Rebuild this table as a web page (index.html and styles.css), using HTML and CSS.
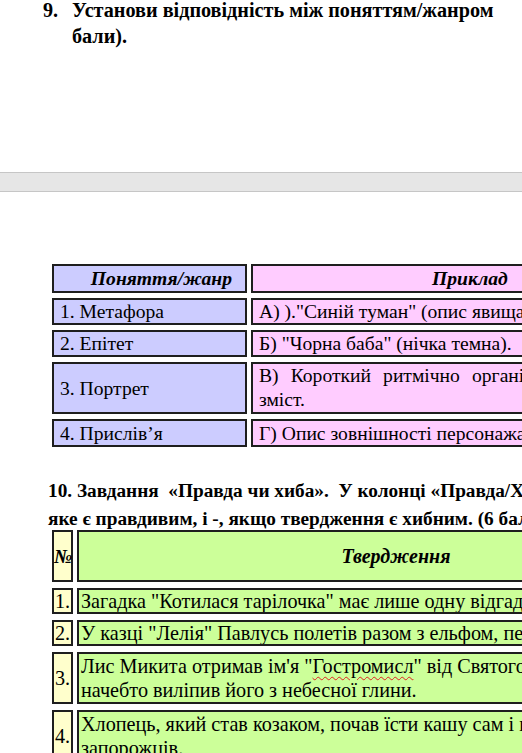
FILE: index.html
```html
<!DOCTYPE html>
<html lang="uk">
<head>
<meta charset="utf-8">
<title>Завдання 9–10</title>
<link rel="stylesheet" href="styles.css">
</head>
<body>
<div class="doc">
  <section class="page page-top">
    <div class="task task-9">
      <span class="task-num">9.</span>
      <span class="task-text">Установи відповідність між поняттям/жанром<br>бали).</span>
    </div>
  </section>

  <div class="page-gap"></div>

  <section class="page page-bottom">
    <table class="match">
      <tr>
        <th class="term head">Поняття/жанр</th>
        <th class="example head">Приклад</th>
      </tr>
      <tr>
        <td class="term">1. Метафора</td>
        <td class="example">А) )."Синій туман" (опис явища природи).</td>
      </tr>
      <tr>
        <td class="term">2. Епітет</td>
        <td class="example">Б) "Чорна баба" (нічка темна).</td>
      </tr>
      <tr>
        <td class="term">3. Портрет</td>
        <td class="example two-line"><span class="jline">В) Короткий ритмічно організований вислів, що має повчальний</span>зміст.</td>
      </tr>
      <tr class="last">
        <td class="term">4. Прислів’я</td>
        <td class="example">Г) Опис зовнішності персонажа.</td>
      </tr>
    </table>

    <p class="task task-10">10. Завдання &nbsp;«Правда чи хиба». &nbsp;У колонці «Правда/Хиба» постав +, якщо твердження,<br>яке є правдивим, і -, якщо твердження є хибним. (6 балів)</p>

    <table class="truth">
      <tr class="truth-head">
        <th class="num">№</th>
        <th class="stmt">Твердження</th>
        <th class="mark">Правда/Хиба</th>
      </tr>
      <tr>
        <td class="num">1.</td>
        <td class="stmt">Загадка "Котилася тарілочка" має лише одну відгадку – сонце.</td>
        <td class="mark"></td>
      </tr>
      <tr>
        <td class="num">2.</td>
        <td class="stmt">У казці "Лелія" Павлусь полетів разом з ельфом, перетворившись на лелеку.</td>
        <td class="mark"></td>
      </tr>
      <tr class="tall">
        <td class="num">3.</td>
        <td class="stmt">Лис Микита отримав ім'я "<span class="misspelt">Гостромисл</span>" від Святого Миколая, який<br>начебто виліпив його з небесної глини.</td>
        <td class="mark"></td>
      </tr>
      <tr class="tall">
        <td class="num">4.</td>
        <td class="stmt">Хлопець, який став козаком, почав їсти кашу сам і годувати<br>запорожців.</td>
        <td class="mark"></td>
      </tr>
    </table>
  </section>
</div>
</body>
</html>
```

FILE: styles.css
```css
html, body {
  margin: 0;
  padding: 0;
  background: #ffffff;
  overflow: hidden;
}

.doc {
  width: 1000px;
  font-family: "Liberation Serif", "Times New Roman", serif;
  color: #000000;
}

/* ---------- page 1 (end) ---------- */
.page-top {
  height: 175px;
}

.task-9 {
  display: flex;
  padding-left: 43px;
  margin-top: -3px;
  font-weight: bold;
  font-size: 20.2px;
  line-height: 26px;
}

.task-9 .task-num {
  width: 29px;
  flex: none;
}

.task-9 .task-text {
  width: 800px;
}

/* ---------- page break ---------- */
.page-gap {
  height: 18px;
  background: #e6e6e6;
  border-top: 1px solid #c6c6c6;
  border-bottom: 1px solid #c6c6c6;
}

/* ---------- page 2 ---------- */
.page-bottom {
  padding-top: 67px;
}

table {
  border-collapse: separate;
}

.match {
  margin-left: 48px;
  border-spacing: 4px 5px;
  font-size: 19.6px;
}

.match td,
.match th {
  box-sizing: border-box;
  border: 2px solid #1e1e1e;
  padding: 0 6px;
  line-height: 23px;
  height: 27px;
  vertical-align: middle;
}

.match .last td {
  height: 28px;
}

.match .term {
  width: 195px;
  background: #ccccff;
  text-align: left;
}

.match .example {
  width: 606px;
  background: #ffccff;
  text-align: justify;
}

.match .example.two-line {
  line-height: 24px;
  height: 52px;
}

.match .head {
  height: 29px;
  font-style: italic;
  font-weight: bold;
}

.match .term.head {
  text-align: right;
  padding-right: 13px;
}

.match .example.head {
  text-align: left;
  padding-left: 179px;
}

.jline {
  display: block;
  text-align: justify;
  text-align-last: justify;
}

.task-10 {
  margin: 25px 0 0 48px;
  font-weight: bold;
  font-size: 19.3px;
  line-height: 28px;
  white-space: nowrap;
}

.truth {
  margin-left: 48px;
  margin-top: -9px;
  border-spacing: 4px 6px;
  font-size: 20.2px;
  table-layout: fixed;
  width: 795px;
}

.truth td,
.truth th {
  box-sizing: border-box;
  border: 2px solid #1e1e1e;
  padding: 0 2px;
  line-height: 22px;
  height: 26px;
  vertical-align: middle;
}

.truth .tall td {
  line-height: 24px;
  height: 52px;
}

.truth .num {
  width: 21px;
  padding: 0 1px;
  background: #ffffcc;
  text-align: left;
}

.truth .stmt {
  width: 638px;
  background: #ccff99;
  text-align: left;
  white-space: nowrap;
  overflow: hidden;
}

.truth .mark {
  width: 120px;
  background: #ccff99;
}

.truth-head th {
  height: 52px;
  font-style: italic;
  font-weight: bold;
}

.truth-head .num {
  font-size: 20px;
  text-align: center;
  padding: 0;
  letter-spacing: -1.5px;
  overflow: visible;
}

.truth-head .stmt {
  text-align: center;
  font-size: 20px;
}

.truth-head .mark {
  font-size: 19.6px;
}

.misspelt {
  text-decoration: underline wavy #e02020;
  text-decoration-thickness: 1px;
  text-underline-offset: 3px;
}
```
